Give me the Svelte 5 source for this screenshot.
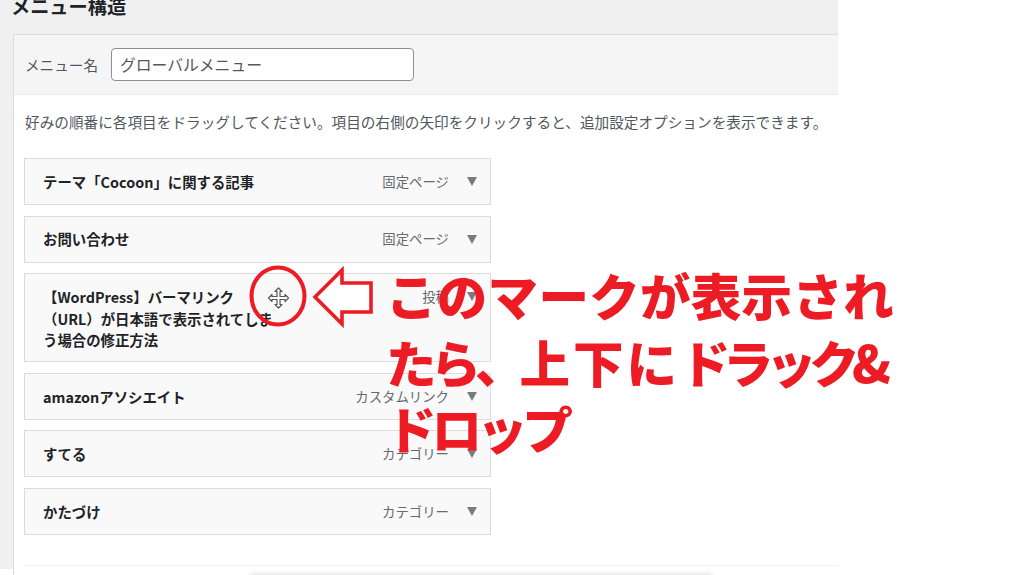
<script lang="ts">
	const items = [
		{ title: 'テーマ「Cocoon」に関する記事', type: '固定ページ' },
		{ title: 'お問い合わせ', type: '固定ページ' },
		{ title: '【WordPress】バーマリンク（URL）が日本語で表示されてしまう場合の修正方法', type: '投稿', tall: true },
		{ title: 'amazonアソシエイト', type: 'カスタムリンク' },
		{ title: 'すてる', type: 'カテゴリー' },
		{ title: 'かたづけ', type: 'カテゴリー' }
	];
</script>

<div class="screen">
	<main class="main">
		<h2>メニュー構造</h2>
		<section class="panel">
			<header class="panel-head">
				<label for="menu-name">メニュー名</label>
				<input id="menu-name" type="text" value="グローバルメニュー" />
			</header>
			<div class="panel-body">
				<p class="hint">好みの順番に各項目をドラッグしてください。項目の右側の矢印をクリックすると、追加設定オプションを表示できます。</p>
				<ul class="menu-items">
					{#each items as item}
						<li class="menu-item" class:tall={item.tall}>
							<span class="title">{item.title}</span>
							<span class="controls">
								<span class="type">{item.type}</span>
								<svg class="caret" width="10" height="9" viewBox="0 0 10 9"><path d="M0 0h10L5 9z" fill="#787c82" /></svg>
							</span>
						</li>
					{/each}
				</ul>
				<div class="divider"></div>
			</div>
		</section>
	</main>

	<!-- annotation drawn over the screenshot -->
	<svg class="marks" width="1024" height="575" viewBox="0 0 1024 575" fill="none">
		<ellipse cx="278" cy="296" rx="26.500" ry="28.500" stroke="#ed1c24" stroke-width="4" />
		<path d="M315 297 342 270V283H371V312H342V324Z" stroke="#ed1c24" stroke-width="3.600" fill="#fff" stroke-linejoin="miter" />
		<g transform="translate(278.500 298)" stroke="#555" stroke-width="1.200" fill="#fff" stroke-linejoin="round">
			<path d="M0-10 3.500-6.500H1.500V-1.500H6.500V-3.500L10 0 6.500 3.500V1.500H1.500V6.500H3.500L0 10-3.500 6.500H-1.500V1.500H-6.500V3.500L-10 0-6.500-3.500V-1.500H-1.500V-6.500H-3.500Z" />
		</g>
	</svg>
	<p class="note">
		<span class="line-a">このマークが表示され</span><br />
		<span class="tight-a">たら、</span><span class="wide">上下に</span><span class="tight-b">ドラック&</span><br />
		<span class="tight-c">ドロップ</span>
	</p>
	<div class="bottom-shadow"></div>
</div>

<style>
	:global(body) {
		margin: 0;
		background: #fff;
	}

	.screen {
		position: relative;
		width: 1024px;
		height: 575px;
		overflow: hidden;
		background: #fff;
		font-family: 'Noto Sans CJK JP', 'Noto Sans', sans-serif;
		color: #3c434a;
	}

	.main {
		width: 825px;
		height: 575px;
		padding-left: 13px;
		background: #f0f0f0;
	}

	h2 {
		margin: -6px 0 16px -2px;
		font-size: 19.2px;
		line-height: 24px;
		font-weight: 700;
		color: #1d2327;
	}

	.panel {
		border-top: 1px solid #dcdcde;
		border-left: 1px solid #dcdcde;
		background: #fff;
		height: 541px;
	}

	.panel-head {
		display: flex;
		align-items: center;
		gap: 13px;
		height: 60px;
		box-sizing: border-box;
		padding-left: 11px;
		background: #f5f5f5;
		border-bottom: 1px solid #ececec;
	}

	label {
		font-size: 14.6px;
		color: #50575e;
	}

	input {
		width: 303px;
		height: 33px;
		box-sizing: border-box;
		padding: 0 8px;
		border: 1px solid #8c8f94;
		border-radius: 4px;
		background: #fff;
		font: 15.8px 'Noto Sans CJK JP', sans-serif;
		color: #50575e;
	}

	.panel-body {
		padding-left: 10px;
	}

	.hint {
		margin: 0 0 0 1px;
		padding-top: 16px;
		font-size: 14.65px;
		line-height: 22px;
		color: #50575e;
		white-space: nowrap;
	}

	.menu-items {
		list-style: none;
		margin: 25px 0 0;
		padding: 0;
		width: 467px;
		display: flex;
		flex-direction: column;
		gap: 10.5px;
	}

	.menu-item {
		display: flex;
		justify-content: space-between;
		align-items: center;
		box-sizing: border-box;
		height: 47px;
		padding: 0 13px 0 18px;
		background: #f9f9f9;
		border: 1px solid #dcdcde;
	}

	.menu-item.tall {
		height: 89.4px;
		align-items: flex-start;
		padding-top: 12px;
	}

	.title {
		font-size: 14.4px;
		line-height: 21.5px;
		font-weight: 700;
		color: #1d2327;
	}

	.tall .title {
		width: 232px;
	}

	.controls {
		display: flex;
		align-items: center;
		gap: 18px;
		flex: none;
	}

	.type {
		font-size: 13.4px;
		line-height: 21.5px;
		color: #646970;
	}

	.divider {
		margin-top: 30px;
		border-top: 1px solid #f0f0f0;
	}

	.marks {
		position: absolute;
		left: 0;
		top: 0;
	}

	.note {
		position: absolute;
		left: 386px;
		top: 261px;
		margin: 0;
		font-size: 50.5px;
		line-height: 66.5px;
		font-weight: 900;
		color: #ed1c24;
		white-space: nowrap;
	}

	.line-a {
		letter-spacing: 0.3px;
	}

	.tight-a {
		letter-spacing: -6px;
	}

	.wide {
		letter-spacing: 3px;
	}

	.tight-b {
		letter-spacing: -7.5px;
	}

	.tight-c {
		letter-spacing: -5px;
	}

	.bottom-shadow {
		position: absolute;
		left: 250px;
		top: 575px;
		width: 462px;
		height: 20px;
		box-shadow: 0 0 5px rgba(0, 0, 0, 0.2);
	}
</style>
